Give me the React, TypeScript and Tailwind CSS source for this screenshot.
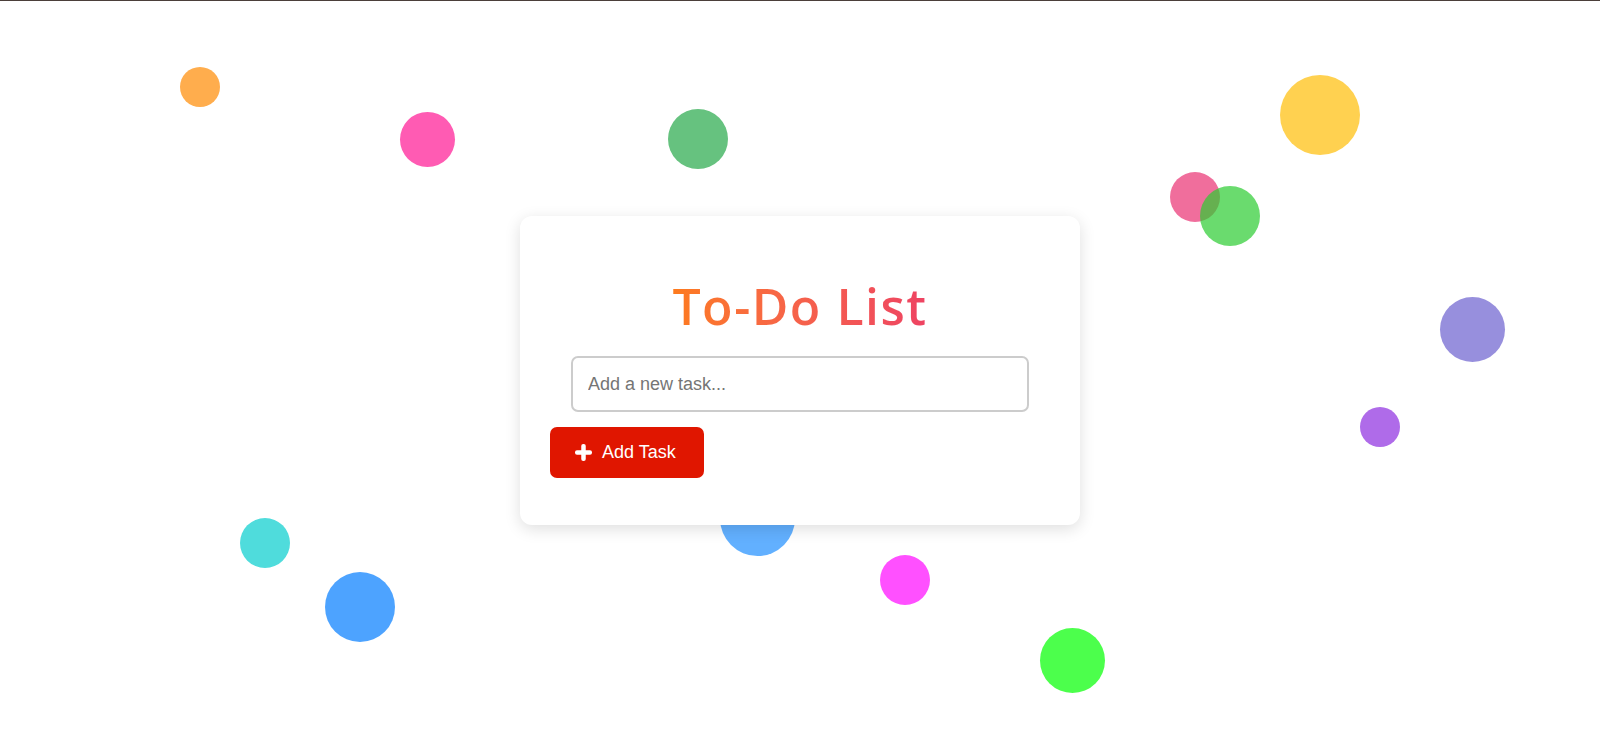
import React from "react";

type Dot = { left: number; top: number; size: number; color: string; opacity?: number };

const dots: Dot[] = [
  { left: 180, top: 67, size: 40, color: "#ffad4d" },
  { left: 400, top: 112, size: 55, color: "#ff5bb3" },
  { left: 668, top: 109, size: 60, color: "#66c27f" },
  { left: 1280, top: 75, size: 80, color: "#ffd150" },
  { left: 1170, top: 172, size: 50, color: "#e93072", opacity: 0.7 },
  { left: 1200, top: 186, size: 60, color: "#2bcc30", opacity: 0.7 },
  { left: 1440, top: 297, size: 65, color: "#978fdd" },
  { left: 1360, top: 407, size: 40, color: "#af6be9" },
  { left: 240, top: 518, size: 50, color: "#4fdcdc" },
  { left: 325, top: 572, size: 70, color: "#4da3ff" },
  { left: 720, top: 481, size: 75, color: "#62b0ff" },
  { left: 880, top: 555, size: 50, color: "#ff50ff" },
  { left: 1040, top: 628, size: 65, color: "#4cff4c" },
];

export default function App() {
  return (
    <div className="relative min-h-screen overflow-hidden bg-white">
      <div className="h-px w-full bg-[#4b3f3a]" />
      {dots.map((d, i) => (
        <div
          key={i}
          className="absolute rounded-full"
          style={{
            left: d.left,
            top: d.top,
            width: d.size,
            height: d.size,
            backgroundColor: d.color,
            opacity: d.opacity ?? 1,
          }}
        />
      ))}
      <div className="relative z-10 flex justify-center pt-[215px]">
        <div className="flex w-[560px] flex-col rounded-[12px] bg-white px-[30px] pb-[47px] pt-[30px] shadow-[0_4px_16px_rgba(0,0,0,0.13)]">
          <div className="mt-[30px] flex justify-center">
            <h1
              className="inline-block bg-gradient-to-r from-[#fd7b1c] to-[#ee4262] bg-clip-text text-[50px] font-semibold leading-[60px] tracking-[1.5px] text-transparent"
              style={{ fontFamily: '"Open Sans", "Noto Sans", sans-serif' }}
            >
              To-Do List
            </h1>
          </div>
          <input
            type="text"
            placeholder="Add a new task..."
            className="mx-auto mt-[20px] h-[56px] w-[458px] rounded-[7px] border-2 border-[#cccccc] bg-white px-[15px] text-[18px] text-[#333] outline-none placeholder:text-[#757575]"
            style={{ fontFamily: '"Liberation Sans", Arial, sans-serif' }}
          />
          <div className="mt-[15px] flex">
            <button
              className="flex h-[51px] items-center gap-[10px] rounded-[7px] bg-[#e01600] pl-[25px] pr-[28px] text-[18px] text-white"
              style={{ fontFamily: '"Liberation Sans", Arial, sans-serif' }}
            >
              <svg width="17" height="17" viewBox="0 0 17 17" fill="white" aria-hidden="true">
                <rect x="6.25" y="0" width="4.5" height="17" rx="2" />
                <rect x="0" y="6.25" width="17" height="4.5" rx="2" />
              </svg>
              <span>Add Task</span>
            </button>
          </div>
        </div>
      </div>
    </div>
  );
}
